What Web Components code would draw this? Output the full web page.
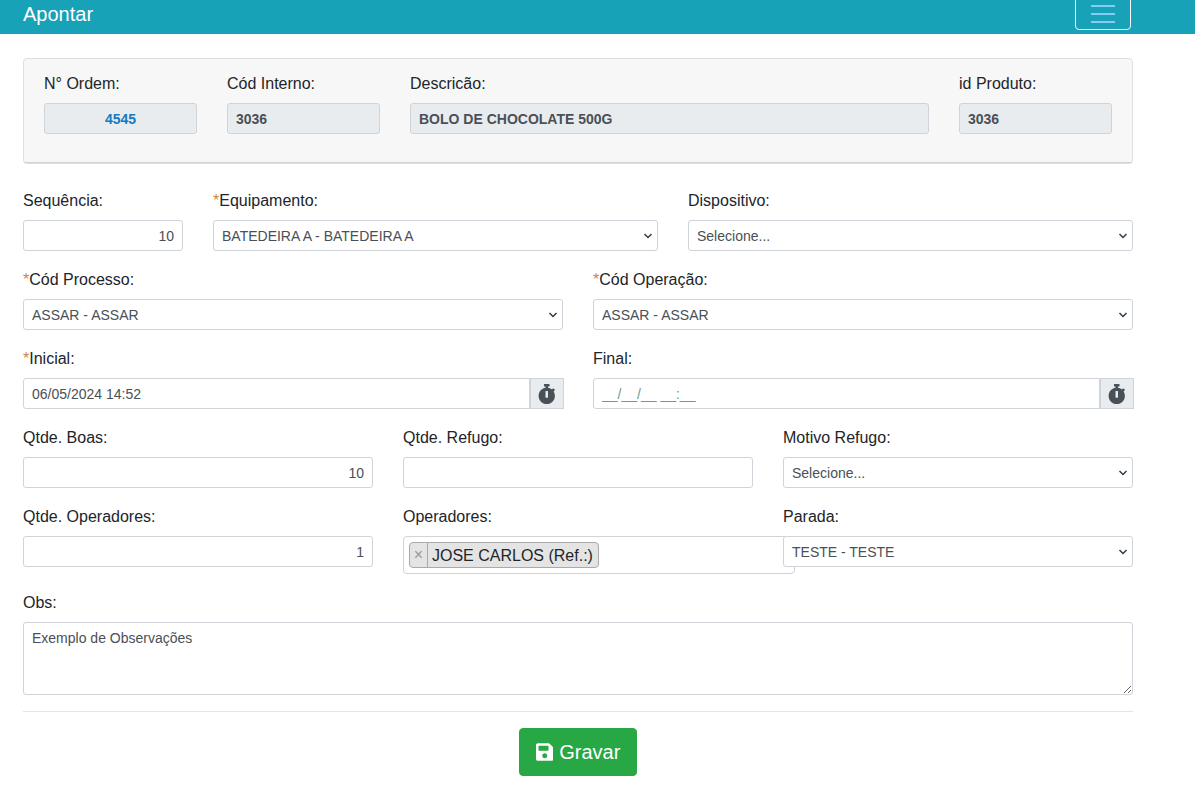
<!DOCTYPE html>
<html lang="pt-BR">
<head>
<meta charset="utf-8">
<meta name="viewport" content="width=device-width, initial-scale=1">
<title>Apontar</title>
<style>
  body {
    margin: 0;
    background: #fff;
    color: #212529;
    font: 16px/24px "Liberation Sans", Arial, sans-serif;
  }
</style>
</head>
<body>
<apontar-page></apontar-page>

<script>
const CONTROL_CSS = `
  *, *::before, *::after { box-sizing: border-box; }
  input, select, textarea {
    display: block;
    width: 100%;
    margin: 0;
    padding: 4px 8px;
    border: 1px solid #ced4da;
    border-radius: 3px;
    background-color: #fff;
    color: #495057;
    font: 14px/21px "Liberation Sans", Arial, sans-serif;
    outline: 0;
  }
  input, select { height: 31px; }
  select, textarea { padding: 5px 8px 3px; }
  input:focus, select:focus, textarea:focus { border-color: #80bdff; }
`;

class NavBar extends HTMLElement {
  constructor() {
    super();
    this.attachShadow({ mode: "open" }).innerHTML = `
      <style>
        :host { display: block; background: #17a2b8; overflow: hidden; }
        nav {
          display: flex; justify-content: space-between; align-items: flex-end;
          height: 34px; padding: 0 64px 4px 23px; box-sizing: border-box;
        }
        a { color: #fff; font-size: 20px; line-height: 32px; text-decoration: none; }
        button {
          display: flex; align-items: center; justify-content: center;
          flex: none; width: 56px; height: 40px; padding: 0; box-sizing: border-box;
          border: 1px solid #f8f9fa; border-radius: 4px; background: none;
        }
        svg { display: block; width: 30px; height: 30px; }
      </style>
      <nav>
        <a href="#"><slot></slot></a>
        <button type="button" aria-label="Menu">
          <svg viewBox="0 0 30 30" aria-hidden="true"><path stroke="#86cbf8" stroke-width="2" d="M3 11h24M3 19h24M3 27h24"/></svg>
        </button>
      </nav>`;
  }
}
customElements.define("nav-bar", NavBar);

class FieldRow extends HTMLElement {
  constructor() {
    super();
    this.attachShadow({ mode: "open" }).innerHTML = `
      <style>
        :host {
          display: grid;
          grid-template-columns: repeat(12, minmax(0, 1fr));
          column-gap: 30px;
          align-items: start;
        }
      </style>
      <slot></slot>`;
  }
}
customElements.define("field-row", FieldRow);

class OrderCard extends HTMLElement {
  constructor() {
    super();
    this.attachShadow({ mode: "open" }).innerHTML = `
      <style>
        :host {
          display: block; margin-bottom: 24px;
          border: 1px solid #dfdfdf; border-radius: 4px; background: #f7f7f7;
        }
        div { padding: 12px 20px; border-bottom: 1px solid #d2d2d2; }
      </style>
      <div><slot></slot></div>`;
  }
}
customElements.define("order-card", OrderCard);

/* Label with its control. Attributes: label, kind (text | select | area | date | tags),
   value, cols (width in twelfths), required, readonly, align, accent. */
class FormField extends HTMLElement {
  connectedCallback() {
    if (this.shadowRoot) return;
    const get = (name) => this.getAttribute(name) || "";
    const value = get("value");
    const lock = this.hasAttribute("readonly") ? "readonly" : "";
    const controls = {
      text: () => `<input id="c" type="text" value="${value}" ${lock}>`,
      select: () => `<select id="c"><option>${value}</option></select>`,
      area: () => `<textarea id="c" rows="3">${value}</textarea>`,
      date: () => `
        <div class="group">
          <input id="c" type="text" value="${value}" placeholder="__/__/__ __:__">
          <button type="button" aria-label="Agora">
            <svg viewBox="0 0 448 512" aria-hidden="true"><path fill="currentColor" d="M432 304c0 114.9-93.1 208-208 208S16 418.9 16 304c0-104 76.3-190.2 176-205.5V64h-28c-6.6 0-12-5.4-12-12V12c0-6.6 5.4-12 12-12h120c6.6 0 12 5.4 12 12v40c0 6.6-5.4 12-12 12h-28v34.5c37.5 5.8 71.7 21.6 99.7 44.6l27.5-27.5c4.7-4.7 12.3-4.7 17 0l28.3 28.3c4.7 4.7 4.7 12.3 0 17l-29.4 29.4-.6.6C419.7 223.3 432 262.2 432 304zm-176 36V188.5c0-6.6-5.4-12-12-12h-40c-6.6 0-12 5.4-12 12V340c0 6.6 5.4 12 12 12h40c6.6 0 12-5.4 12-12z"/></svg>
          </button>
        </div>`,
      tags: () => `
        <div class="tags">
          <span class="tag"><button type="button" aria-label="Remover">×</button><span>${value}</span></span>
          <input id="c" type="text">
        </div>`
    };
    const star = this.hasAttribute("required") ? `<span class="star">*</span>` : "";
    this.attachShadow({ mode: "open" }).innerHTML = `
      <style>
        ${CONTROL_CSS}
        :host { display: block; min-width: 0; margin-bottom: 16px; grid-column: span ${get("cols") || 12}; }
        label { display: block; width: fit-content; margin-bottom: 6px; line-height: 26px; }
        .star { color: #cc8640; }
        input { text-align: ${get("align") || "left"}; }
        input::placeholder { color: #6f9990; opacity: 1; }
        input[readonly] { background-color: #e9ecef; font-weight: bold; color: ${get("accent") || "#495057"}; }
        select {
          appearance: none;
          padding-right: 24px;
          background-image: url("data:image/svg+xml,%3Csvg xmlns='http://www.w3.org/2000/svg' viewBox='0 0 10 6'%3E%3Cpath d='M1.5 1l3.5 3.5L8.5 1' fill='none' stroke='%23343a40' stroke-width='1.5'/%3E%3C/svg%3E");
          background-repeat: no-repeat;
          background-position: right 4px center;
          background-size: 10px 6px;
        }
        textarea { height: 73px; resize: vertical; }
        .group { display: flex; margin-right: -1px; }
        .group input { flex: 1; min-width: 0; border-radius: 3px 0 0 3px; }
        .group button {
          display: flex; align-items: center; justify-content: center;
          flex: none; width: 34px; height: 31px; padding: 0;
          border: 1px solid #ced4da; background: #e9ecef; color: #495057;
        }
        .group svg { display: block; height: 20px; }
        .tags {
          display: flex; align-items: center; min-width: 392px; height: 38px;
          padding: 0 5px; border: 1px solid #ced4da; border-radius: 4px; background: #fff;
        }
        .tags input { flex: 1; min-width: 0; height: 24px; border: 0; background: none; }
        .tag {
          display: flex; flex: none; height: 26px; line-height: 26px;
          border: 1px solid #aaa; border-radius: 4px; background: #e4e4e4;
        }
        .tag button {
          width: 18px; padding: 0; border: 0; border-right: 1px solid #aaa;
          background: none; color: #999; font: 16px/24px "Liberation Sans", Arial, sans-serif;
        }
        .tag span { padding: 0 5px 0 4px; }
      </style>
      <label for="c">${star}${get("label")}</label>
      ${controls[get("kind") || "text"]()}`;
  }
}
customElements.define("form-field", FormField);

class SaveButton extends HTMLElement {
  constructor() {
    super();
    this.attachShadow({ mode: "open" }).innerHTML = `
      <style>
        :host { display: flex; justify-content: center; margin-top: 16px; padding-top: 16px; border-top: 1px solid #e5e5e5; }
        button {
          display: flex; align-items: center; gap: 6px;
          height: 48px; padding: 0 16px; border: 1px solid #28a745; border-radius: 4px;
          background: #28a745; color: #fff; font: 20px/30px "Liberation Sans", Arial, sans-serif;
        }
        svg { display: block; height: 20px; }
      </style>
      <button type="submit">
        <svg viewBox="0 0 448 512" aria-hidden="true"><path fill="currentColor" d="M433.941 129.941l-83.882-83.882A48 48 0 0 0 316.118 32H48C21.49 32 0 53.49 0 80v352c0 26.51 21.49 48 48 48h352c26.51 0 48-21.49 48-48V163.882a48 48 0 0 0-14.059-33.941zM224 416c-35.346 0-64-28.654-64-64 0-35.346 28.654-64 64-64s64 28.654 64 64c0 35.346-28.654 64-64 64zm96-304.52V212c0 6.627-5.373 12-12 12H76c-6.627 0-12-5.373-12-12V108c0-6.627 5.373-12 12-12h228.52c3.183 0 6.235 1.264 8.485 3.515l3.48 3.48A11.996 11.996 0 0 1 320 111.48z"/></svg>
        <slot></slot>
      </button>`;
  }
}
customElements.define("save-button", SaveButton);

class ApontarPage extends HTMLElement {
  constructor() {
    super();
    this.attachShadow({ mode: "open" }).innerHTML = `
      <style>
        :host { display: block; }
        main { padding: 24px 62px 15px 23px; }
      </style>
      <nav-bar>Apontar</nav-bar>
      <main>
        <order-card>
          <field-row>
            <form-field cols="2" label="N° Ordem:" value="4545" align="center" accent="#147ac1" readonly></form-field>
            <form-field cols="2" label="Cód Interno:" value="3036" readonly></form-field>
            <form-field cols="6" label="Descricão:" value="BOLO DE CHOCOLATE 500G" readonly></form-field>
            <form-field cols="2" label="id Produto:" value="3036" readonly></form-field>
          </field-row>
        </order-card>
        <field-row>
          <form-field cols="2" label="Sequência:" value="10" align="right"></form-field>
          <form-field cols="5" kind="select" label="Equipamento:" value="BATEDEIRA A - BATEDEIRA A" required></form-field>
          <form-field cols="5" kind="select" label="Dispositivo:" value="Selecione..."></form-field>
        </field-row>
        <field-row>
          <form-field cols="6" kind="select" label="Cód Processo:" value="ASSAR - ASSAR" required></form-field>
          <form-field cols="6" kind="select" label="Cód Operação:" value="ASSAR - ASSAR" required></form-field>
        </field-row>
        <field-row>
          <form-field cols="6" kind="date" label="Inicial:" value="06/05/2024 14:52" required></form-field>
          <form-field cols="6" kind="date" label="Final:"></form-field>
        </field-row>
        <field-row>
          <form-field cols="4" label="Qtde. Boas:" value="10" align="right"></form-field>
          <form-field cols="4" label="Qtde. Refugo:" align="right"></form-field>
          <form-field cols="4" kind="select" label="Motivo Refugo:" value="Selecione..."></form-field>
        </field-row>
        <field-row>
          <form-field cols="4" label="Qtde. Operadores:" value="1" align="right"></form-field>
          <form-field cols="4" kind="tags" label="Operadores:" value="JOSE CARLOS (Ref.:)"></form-field>
          <form-field cols="4" kind="select" label="Parada:" value="TESTE - TESTE"></form-field>
        </field-row>
        <form-field kind="area" label="Obs:" value="Exemplo de Observações"></form-field>
        <save-button>Gravar</save-button>
      </main>`;
  }
}
customElements.define("apontar-page", ApontarPage);
</script>
</body>
</html>
